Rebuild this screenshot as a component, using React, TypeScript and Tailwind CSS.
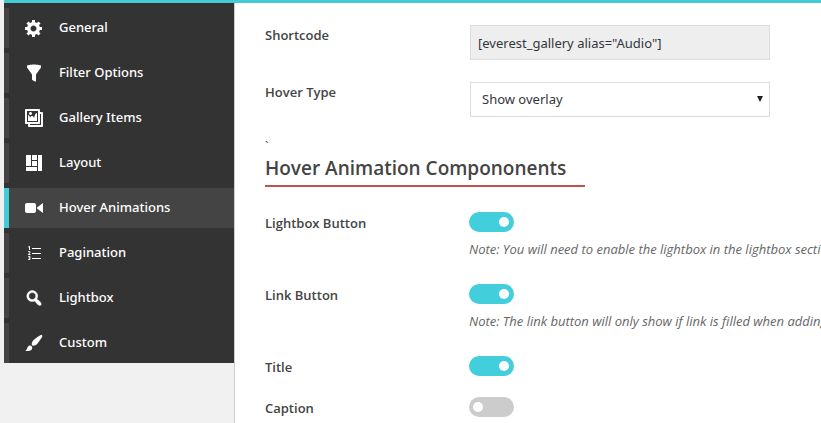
import { useState, type ReactNode } from "react";

const tabs: { id: string; label: string; icon: ReactNode }[] = [
  {
    id: "general",
    label: "General",
    icon: (
      <path d="M18 12h-2.18c-.17.7-.44 1.35-.81 1.93l1.54 1.54-2.1 2.1-1.54-1.54c-.58.36-1.23.63-1.91.79V19H8v-2.18c-.68-.16-1.33-.43-1.91-.79l-1.54 1.54-2.12-2.12 1.54-1.54c-.36-.58-.63-1.23-.79-1.91H1V9.03h2.17c.16-.7.44-1.35.8-1.94L2.43 5.55l2.1-2.1 1.54 1.54c.58-.37 1.24-.64 1.93-.81V2h3v2.18c.68.16 1.33.43 1.91.79l1.54-1.54 2.12 2.12-1.54 1.54c.36.59.64 1.24.8 1.94H18V12zm-8.5 1.5c1.66 0 3-1.34 3-3s-1.34-3-3-3-3 1.34-3 3 1.34 3 3 3z" />
    ),
  },
  {
    id: "filter",
    label: "Filter Options",
    icon: (
      <path d="M3 4.5v-2s3.34-1 7-1 7 1 7 1v2l-5 7.03v6.97s-1.22-.09-2.25-.59S8 16.5 8 16.5v-4.97z" />
    ),
  },
  {
    id: "items",
    label: "Gallery Items",
    icon: (
      <path d="M16 4h1.96c.57 0 1.04.47 1.04 1.04v12.92c0 .57-.47 1.04-1.04 1.04H5.04C4.47 19 4 18.53 4 17.96V16H2.04C1.47 16 1 15.53 1 14.96V2.04C1 1.47 1.47 1 2.04 1h12.92c.57 0 1.04.47 1.04 1.04V4zM3 14h11V3H3v11zm5-8.5C8 4.67 7.33 4 6.5 4S5 4.67 5 5.5 5.67 7 6.5 7 8 6.33 8 5.5zm2 4.5s1-5 3-5v8H4V7c2 0 2 3 2 3s.33-2 2-2 2 2 2 2zm7 7V6h-1v8.96c0 .57-.47 1.04-1.04 1.04H6v1h11z" />
    ),
  },
  {
    id: "layout",
    label: "Layout",
    icon: (
      <path d="M2 2h5v11H2V2zm6 0h5v5H8V2zm6 0h4v16h-4V2zM8 8h5v5H8V8zm-6 6h11v4H2v-4z" />
    ),
  },
  {
    id: "hover",
    label: "Hover Animations",
    icon: (
      <path d="M12 13V7c0-1.1-.9-2-2-2H3c-1.1 0-2 .9-2 2v6c0 1.1.9 2 2 2h7c1.1 0 2-.9 2-2zm1-2.5l6 4.5V5l-6 4.5v1z" />
    ),
  },
  {
    id: "pagination",
    label: "Pagination",
    icon: (
      <>
        <path d="M8 5h9v1H8zM8 10h9v1H8zM8 15h9v1H8z" />
        <path
          d="M4.2 4.1L5.5 3.3V7M4.2 8.6h1.6v1.3L4.4 11.5h2M4.2 13.4h1.7v3.1H4.2M4.6 14.9h1.3"
          fill="none"
          stroke="currentColor"
        />
      </>
    ),
  },
  {
    id: "lightbox",
    label: "Lightbox",
    icon: (
      <path
        d="M12.14 4.18c1.87 1.87 2.11 4.75.72 6.89.12.1.22.21.36.31.2.16.47.36.81.59.34.24.56.39.66.47.42.31.73.57.94.78.32.32.6.65.84 1 .25.35.44.69.59 1.04.14.35.21.68.18 1-.02.32-.14.59-.36.81s-.49.34-.81.36c-.31.02-.65-.04-.99-.19-.35-.14-.7-.34-1.04-.59-.35-.24-.68-.52-1-.84-.21-.21-.47-.52-.77-.93-.1-.13-.25-.35-.47-.66-.22-.32-.4-.57-.56-.78-.16-.2-.29-.35-.44-.5-2.07 1.09-4.69.76-6.44-.98-2.14-2.15-2.14-5.64 0-7.78 2.15-2.15 5.63-2.15 7.78 0zm-1.41 6.36c1.36-1.37 1.36-3.58 0-4.95-1.37-1.37-3.59-1.37-4.95 0-1.37 1.37-1.37 3.58 0 4.95 1.36 1.37 3.58 1.37 4.95 0z"
        stroke="currentColor"
        strokeWidth="0.4"
      />
    ),
  },
  {
    id: "custom",
    label: "Custom",
    icon: (
      <path d="M18.33 3.57s.27-.8-.31-1.36c-.53-.52-1.22-.24-1.22-.24-.61.3-5.76 3.47-7.67 5.57-.86.96-2.06 3.79-1.09 4.82.92.98 3.96-.17 4.79-1 2.06-2.06 5.21-7.17 5.5-7.79zM1.4 17.65c2.37-1.56 1.46-3.41 3.23-4.64.93-.65 2.22-.62 3.08.29.63.67.8 2.57-.16 3.46-1.57 1.45-4 1.55-6.15.89z" />
    ),
  },
];

const components = [
  {
    id: "lightbox-button",
    label: "Lightbox Button",
    on: true,
    note: "Note: You will need to enable the lightbox in the lightbox section",
  },
  {
    id: "link-button",
    label: "Link Button",
    on: true,
    note: "Note: The link button will only show if link is filled when adding",
  },
  { id: "title", label: "Title", on: true },
  { id: "caption", label: "Caption", on: false },
];

function Field({ id, label, children }: { id: string; label: string; children: ReactNode }) {
  return (
    <div className="flex items-start">
      <label htmlFor={id} className="w-[204px] shrink-0 text-[13px] leading-[22px] font-semibold">
        {label}
      </label>
      <div className="min-w-0 flex-1">{children}</div>
    </div>
  );
}

export default function App() {
  const [active, setActive] = useState("hover");

  return (
    <div className="flex min-h-screen overflow-hidden bg-[#f1f1f1] pl-1 font-['Open_Sans','Noto_Sans',sans-serif] text-[#444]">
      <div className="flex min-w-0 flex-1 border-t-[3px] border-[#43cbd6]">
        <nav className="w-[230px] shrink-0">
          <ul className="flex flex-col gap-[5px] bg-[#333] pt-[5px]">
            {tabs.map((tab) => (
              <li key={tab.id}>
                <a
                  href={`#${tab.id}`}
                  onClick={() => setActive(tab.id)}
                  className={`flex h-10 items-center gap-[15px] border-l-[5px] pl-[15px] font-['Noto_Sans',sans-serif] text-[13px] leading-5 font-medium text-white ${
                    tab.id === active ? "border-[#43cbd6] bg-[#444]" : "border-[#444]"
                  }`}
                >
                  <svg viewBox="0 0 20 20" className="size-5 shrink-0 fill-current" aria-hidden="true">
                    {tab.icon}
                  </svg>
                  <span className="pb-[2px]">{tab.label}</span>
                </a>
              </li>
            ))}
          </ul>
        </nav>

        <main className="min-w-0 flex-1 overflow-hidden border-l border-[#ccc] bg-white pt-[21px] pl-[30px]">
          <div className="flex flex-col gap-5">
            <Field id="shortcode" label="Shortcode">
              <input
                id="shortcode"
                type="text"
                readOnly
                value={'[everest_gallery alias="Audio"]'}
                className="m-px block h-[35px] w-full max-w-[300px] border border-[#ddd] bg-[#eee] px-[7px] font-['Noto_Sans',sans-serif] text-[13px] text-[#32373c]"
              />
            </Field>
            <Field id="hover-type" label="Hover Type">
              <div className="relative m-px max-w-[300px]">
                <select
                  id="hover-type"
                  className="block h-[35px] w-full appearance-none border border-[#ddd] bg-white px-[11px] font-['Noto_Sans',sans-serif] text-[13px] text-[#32373c]"
                >
                  <option>Show overlay</option>
                </select>
                <svg
                  viewBox="0 0 6 6"
                  className="pointer-events-none absolute top-[14px] right-[7px] size-[6px] fill-[#222]"
                  aria-hidden="true"
                >
                  <path d="M0 0h6L3 6z" />
                </svg>
              </div>
            </Field>
          </div>

          <p className="mt-5 h-4 text-[13px] leading-4">`</p>
          <h2 className="max-w-[320px] border-b-2 border-[#c4504c] pt-px pb-1 text-[19px] leading-[26px] font-semibold whitespace-nowrap">
            Hover Animation Compononents
          </h2>

          <div className="mt-[25px] flex flex-col gap-[19px]">
            {components.map((item) => (
              <Field key={item.id} id={item.id} label={item.label}>
                <input
                  id={item.id}
                  type="checkbox"
                  defaultChecked={item.on}
                  className="flex h-5 w-[45px] cursor-pointer appearance-none items-center rounded-full bg-[#ccc] px-[4px] before:size-[10px] before:rounded-full before:bg-white checked:justify-end checked:bg-[#42cfdb] checked:px-[5px]"
                />
                {item.note && (
                  <p className="mt-[7px] mb-[6px] text-[13px] leading-5 whitespace-nowrap text-[#666] italic">
                    {item.note}
                  </p>
                )}
              </Field>
            ))}
          </div>
        </main>
      </div>
    </div>
  );
}
